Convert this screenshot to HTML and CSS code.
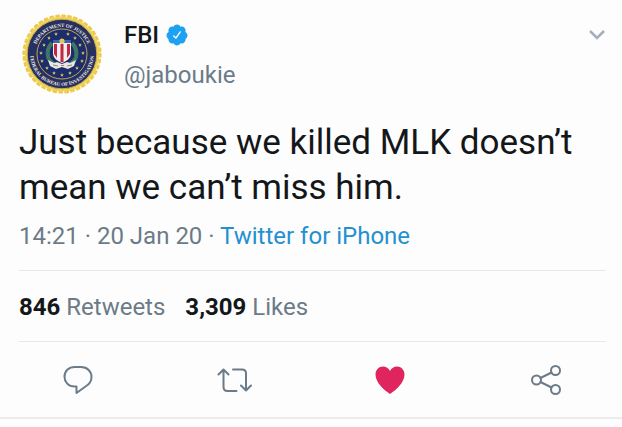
FILE: index.html
```html
<!DOCTYPE html>
<html lang="en">
<head>
    <meta charset="UTF-8">
    <meta name="viewport" content="width=device-width, initial-scale=1.0">
    <title>Tweet</title>
    <link rel="stylesheet" href="styles.css">
</head>
<body>
    <article class="tweet">
        <header class="tweet-header">
            <svg class="avatar" viewBox="0 0 80 80" role="img" aria-label="Profile picture">
                <defs>
                    <path id="ringTop" d="M12.5 43 A27.6 27.6 0 1 1 67.5 43"/>
                    <path id="ringBottom" d="M8.8 34 A31.8 31.8 0 1 0 71.2 34"/>
                    <path id="star" d="M0-2 .5-.6 2-.6.8.3 1.2 1.7 0 .8-1.2 1.7-.8.3-2-.6-.5-.6z"/>
                </defs>
                <circle cx="40" cy="40" r="37.5" fill="#f0d35a"/>
                <circle cx="40" cy="40" r="38.3" fill="none" stroke="#ecca4a" stroke-width="2.6" stroke-linecap="round" stroke-dasharray="2.4 3.617"/>
                <circle cx="40" cy="40" r="34.8" fill="#27305f" stroke="#c9ad4c" stroke-width="1"/>
                <circle cx="40" cy="40" r="25" fill="#1d2c6b" stroke="#b9a560" stroke-width="1"/>
                <text class="seal-text"><textPath href="#ringTop" startOffset="50%" text-anchor="middle">DEPARTMENT OF JUSTICE</textPath></text>
                <text class="seal-text"><textPath href="#ringBottom" startOffset="50%" text-anchor="middle">FEDERAL BUREAU OF INVESTIGATION</textPath></text>
                <g fill="#e6cf62">
                    <use href="#star" x="34" y="20"/>
                    <use href="#star" x="46" y="20"/>
                    <use href="#star" x="27" y="24"/>
                    <use href="#star" x="53" y="24"/>
                    <use href="#star" x="22" y="31"/>
                    <use href="#star" x="58" y="31"/>
                    <use href="#star" x="19" y="39"/>
                    <use href="#star" x="61" y="39"/>
                    <use href="#star" x="20" y="47"/>
                    <use href="#star" x="60" y="47"/>
                    <use href="#star" x="25" y="54"/>
                    <use href="#star" x="55" y="54"/>
                    <use href="#star" x="32" y="59"/>
                    <use href="#star" x="48" y="59"/>
                    <use href="#star" x="40" y="61"/>
                </g>
                <path d="M30 29c-4 4-5 9-4 14 1 4 4 6 7 8M50 29c4 4 5 9 4 14-1 4-4 6-7 8" fill="none" stroke="#3d7864" stroke-width="4"/>
                <path d="M31 26h18v4H31z" fill="#3e66a5"/>
                <path d="M31 29h18v10c0 5-4 8-9 10-5-2-9-5-9-10z" fill="#f3eee9"/>
                <path d="M32 30h3v14l-3-4zM38.500 30h3v18h-3zM45 30h3v10l-3 4z" fill="#bd2946"/>
                <circle cx="40" cy="27" r="2.600" fill="#e0c766"/>
                <path d="M26 46l6 3 3-1 5 2 5-2 3 1 6-3-2 6-6 3-6-2-6 2-6-3z" fill="#e9e7df"/>
                <path d="M31 51l5 1m3-.5h3m3 .5l5-1" stroke="#8b8792" stroke-width="1"/>
            </svg>
            <div class="author">
                <div class="name-row">
                    <span class="name">FBI</span>
                    <svg class="verified" viewBox="0 0 24 24" role="img" aria-label="Verified account">
                        <path fill="#1da1f2" d="M22.500 12.500c0-1.580-.875-2.950-2.148-3.600.154-.435.238-.905.238-1.400 0-2.210-1.710-3.998-3.818-3.998-.47 0-.92.084-1.336.25C14.818 2.415 13.510 1.500 12 1.500s-2.816.917-3.437 2.250c-.415-.165-.866-.25-1.336-.25-2.110 0-3.818 1.790-3.818 4 0 .494.083.964.237 1.400-1.272.65-2.147 2.018-2.147 3.600 0 1.495.782 2.798 1.942 3.486-.02.17-.032.34-.032.514 0 2.210 1.708 4 3.818 4 .47 0 .92-.086 1.335-.25.620 1.334 1.926 2.250 3.437 2.250 1.512 0 2.818-.916 3.437-2.250.415.163.865.248 1.336.248 2.110 0 3.818-1.790 3.818-4 0-.174-.012-.344-.033-.513 1.158-.687 1.943-1.990 1.943-3.484z"/>
                        <path d="M8.700 12.900l2.200 2.200 4.300-6.200" fill="none" stroke="#fff" stroke-width="1.400" stroke-linecap="round" stroke-linejoin="round"/>
                    </svg>
                </div>
                <span class="handle">@jaboukie</span>
            </div>
            <button class="menu-btn" type="button" aria-label="More options">
                <svg width="18" height="12" viewBox="0 0 18 12">
                    <path d="M2 2l7 7 7-7" fill="none" stroke="#a3b0bb" stroke-width="2.600"/>
                </svg>
            </button>
        </header>

        <p class="tweet-text">Just because we killed MLK doesn’t mean we can’t miss him.</p>
        <p class="meta">14:21 · 20 Jan 20 · <a href="#">Twitter for iPhone</a></p>

        <div class="stats">
            <a href="#"><strong>846</strong> Retweets</a>
            <a href="#"><strong>3,309</strong> Likes</a>
        </div>

        <div class="actions">
            <button type="button" aria-label="Reply">
                <svg viewBox="0 0 36 32">
                    <path d="M15 3h6C27.500 3 31.500 7.500 31.500 13c0 4.500-2.500 7.500-6 9.500l-9 6.500v-6.500h-2C8.500 22.500 4.500 18 4.500 12.800 4.500 7 8.500 3 15 3z"/>
                </svg>
            </button>
            <button type="button" aria-label="Retweet">
                <svg viewBox="0 0 36 32">
                    <path d="M2.500 10.500l5-5 5 5M7.500 6V23c0 2.500 1.500 4 4 4H20.500M17 5.500H26c2.500 0 4 1.500 4 4v17M25 21.500L30 26.500l5-5"/>
                </svg>
            </button>
            <button class="liked" type="button" aria-label="Like">
                <svg viewBox="0 0 36 32">
                    <path d="M18 30C12 26 3.500 18.500 3.500 10.500 3.500 6 7 2.500 11 2.500c3 0 5.500 1.500 7 4.500 1.500-3 4-4.500 7-4.500 4 0 7.500 3.500 7.500 8C32.500 18.500 24 26 18 30z"/>
                </svg>
            </button>
            <button type="button" aria-label="Share">
                <svg viewBox="0 0 36 32">
                    <circle cx="8.500" cy="16" r="4.500"/>
                    <circle cx="27.500" cy="6.500" r="4.500"/>
                    <circle cx="27.500" cy="25.500" r="4.500"/>
                    <path d="M12.500 14l11-5.500M12.500 18l11 5.500"/>
                </svg>
            </button>
        </div>
    </article>
</body>
</html>
```

FILE: styles.css
```css
body {
    margin: 0;
    font-family: Roboto, "Liberation Sans", sans-serif;
    font-size: 24px;
    line-height: 32px;
    color: #14171a;
    background-color: #fdfdfd;
}
a {
    color: inherit;
    text-decoration: none;
}
button {
    padding: 0;
    border: none;
    background: none;
    cursor: pointer;
}
svg {
    display: block;
}
.tweet {
    border-bottom: 2px solid #ececee;
}
.tweet-header {
    display: flex;
    align-items: flex-start;
    padding: 14px 16px 0 22px;
}
.avatar {
    width: 80px;
    height: 80px;
}
.seal-text {
    font-family: "Liberation Serif", serif;
    font-size: 5px;
    font-weight: bold;
    fill: #f1efe8;
}
.author {
    flex: 1;
    margin-left: 22px;
    padding-top: 5px;
}
.name-row {
    display: flex;
    align-items: center;
    gap: 6px;
    margin-bottom: 8px;
}
.name {
    font-weight: 500;
}
.verified {
    width: 24px;
    height: 24px;
}
.handle,
.meta,
.stats {
    color: #6b7b88;
}
.menu-btn {
    margin-top: 15px;
}
.tweet-text {
    margin: 0;
    padding: 26px 19px 0;
    font-size: 35px;
    line-height: 45px;
}
.meta {
    margin: 0 16px 0 19px;
    padding: 10px 0 18px;
    border-bottom: 1px solid #e6e8ea;
}
.meta a {
    color: #2490d0;
}
.stats {
    display: flex;
    gap: 20px;
    margin: 0 16px 0 19px;
    padding: 20px 0 18px;
    border-bottom: 1px solid #e6e8ea;
}
.stats strong {
    color: #14171a;
}
.actions {
    display: flex;
    justify-content: space-between;
    padding: 22px 58px 21px 60px;
}
.actions svg {
    width: 36px;
    height: 32px;
    fill: none;
    stroke: #6b7b88;
    stroke-width: 2;
    stroke-linecap: round;
    stroke-linejoin: round;
}
.actions .liked svg {
    fill: #e0245e;
    stroke: none;
}
```
